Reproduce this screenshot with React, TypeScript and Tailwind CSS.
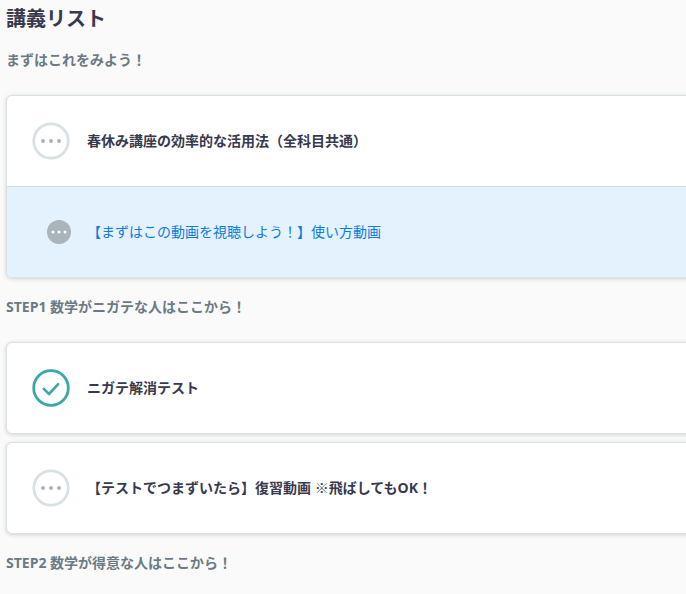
import React from "react";

type Status = "todo" | "done";

interface Lesson {
  title: string;
  status: Status;
  children?: string[];
}

interface Section {
  heading: string;
  lessons: Lesson[];
}

const sections: Section[] = [
  {
    heading: "まずはこれをみよう！",
    lessons: [
      {
        title: "春休み講座の効率的な活用法（全科目共通）",
        status: "todo",
        children: ["【まずはこの動画を視聴しよう！】使い方動画"],
      },
    ],
  },
  {
    heading: "STEP1 数学がニガテな人はここから！",
    lessons: [
      { title: "ニガテ解消テスト", status: "done" },
      { title: "【テストでつまずいたら】復習動画 ※飛ばしてもOK！", status: "todo" },
    ],
  },
  {
    heading: "STEP2 数学が得意な人はここから！",
    lessons: [{ title: "", status: "todo" }],
  },
];

const StatusIcon = ({ status }: { status: Status }) => {
  if (status === "done") {
    return (
      <svg className="size-[38px] shrink-0" viewBox="0 0 38 38" fill="none" stroke="#3aa8a8">
        <circle cx="19" cy="19" r="17.3" strokeWidth="2.8" />
        <path d="M11.8 19.8L17 25L26.2 15.2" strokeWidth="2.6" strokeLinecap="round" strokeLinejoin="round" />
      </svg>
    );
  }
  return (
    <svg className="size-[38px] shrink-0" viewBox="0 0 38 38">
      <circle cx="19" cy="19" r="17.2" fill="none" stroke="#dae1e4" strokeWidth="2.8" />
      <g fill="#aab4ba">
        <circle cx="11" cy="19" r="2" />
        <circle cx="19" cy="19" r="2" />
        <circle cx="27" cy="19" r="2" />
      </g>
    </svg>
  );
};

const SubIcon = () => (
  <svg className="size-6 shrink-0" viewBox="0 0 24 24">
    <circle cx="12" cy="12" r="12" fill="#aab4ba" />
    <g fill="#fff">
      <circle cx="6" cy="12" r="1.5" />
      <circle cx="12" cy="12" r="1.5" />
      <circle cx="18" cy="12" r="1.5" />
    </g>
  </svg>
);

const LessonCard = ({ lesson }: { lesson: Lesson }) => (
  <div className="overflow-hidden rounded-md border border-[#dae1e4] bg-white shadow-[0_1px_4px_rgba(0,0,0,0.16)]">
    <div className="flex h-[90px] items-center gap-[17px] pl-[25px] font-bold text-[#37394d]">
      <StatusIcon status={lesson.status} />
      <span>{lesson.title}</span>
    </div>
    {lesson.children?.map((child) => (
      <div
        key={child}
        className="flex h-[91px] items-center gap-4 border-t border-[#d0dde6] bg-[#e4f2fe] pl-10 text-[#0f7be0]"
      >
        <SubIcon />
        <span>{child}</span>
      </div>
    ))}
  </div>
);

const App = () => {
  return (
    <div className="h-[594px] w-full overflow-hidden bg-[#fafafa] font-['Open_Sans','Noto_Sans_CJK_JP',sans-serif] text-sm">
      <div className="w-[720px] pl-1.5">
        <h1 className="h-[39px] text-xl leading-[38px] font-bold text-[#37394d]">講義リスト</h1>
        {sections.map((section) => (
          <section key={section.heading} className="mb-2">
            <h2 className="mb-[14px] h-[42px] leading-[42px] font-bold text-[#6b7a84]">{section.heading}</h2>
            <div className="flex flex-col gap-2">
              {section.lessons.map((lesson) => (
                <LessonCard key={lesson.title} lesson={lesson} />
              ))}
            </div>
          </section>
        ))}
      </div>
    </div>
  );
};

export default App;
